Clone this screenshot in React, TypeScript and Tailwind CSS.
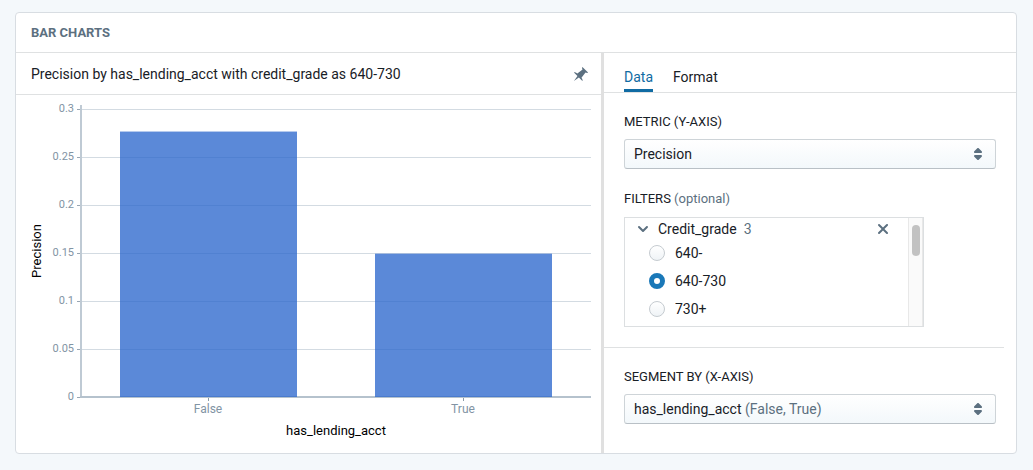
import { useState, type ReactNode } from "react";
import clsx from "clsx";

const BARS = [
  { label: "False", value: 0.2765 },
  { label: "True", value: 0.1493 },
];

const TICKS = ["0.3", "0.25", "0.2", "0.15", "0.1", "0.05", "0"];

const GRADES = ["640-", "640-730", "730+"];

const ICONS = {
  pin: "M9.41.92c-.51.51-.41 1.5.15 2.56L4.34 7.54C2.8 6.48 1.45 6.05.92 6.58l3.54 3.54-3.54 4.95 4.95-3.54 3.54 3.54c.53-.53.1-1.88-.96-3.42l4.06-5.22c1.06.56 2.04.66 2.55.15L9.41.92z",
  doubleCaret:
    "M5 7h6a1.003 1.003 0 00.71-1.71l-3-3C8.53 2.11 8.28 2 8 2s-.53.11-.71.29l-3 3A1.003 1.003 0 005 7zm6 2H5a1.003 1.003 0 00-.71 1.71l3 3c.18.18.43.29.71.29s.53-.11.71-.29l3-3A1.003 1.003 0 0011 9z",
  chevronDown:
    "M12 5c-.28 0-.53.11-.71.29L8 8.59l-3.29-3.3a1.003 1.003 0 00-1.42 1.42l4 4c.18.18.43.29.71.29s.53-.11.71-.29l4-4A1.003 1.003 0 0012 5z",
  cross:
    "M9.41 8l3.29-3.29c.19-.18.3-.43.3-.71a1.003 1.003 0 00-1.71-.71L8 6.59l-3.29-3.3a1.003 1.003 0 00-1.42 1.42L6.59 8 3.3 11.29c-.19.18-.3.43-.3.71a1.003 1.003 0 001.71.71L8 9.41l3.29 3.29c.18.19.43.3.71.3a1.003 1.003 0 00.71-1.71L9.41 8z",
};

function Icon({ name, className }: { name: keyof typeof ICONS; className?: string }) {
  return (
    <svg viewBox="0 0 16 16" className={clsx("size-4 fill-[#5c7080]", className)} aria-hidden="true">
      <path d={ICONS[name]} />
    </svg>
  );
}

function BarChart() {
  const baseline = 302;
  const step = 48;
  const unit = step / 0.05;

  return (
    <svg viewBox="0 0 585 358" className="block h-auto w-full" role="img" aria-label="Precision by has_lending_acct">
      {TICKS.map((tick, i) => (
        <g key={tick}>
          {tick !== "0" && <rect x={66} y={14 + i * step} width={509} height={1} fill="#d3dbe2" />}
          <rect x={61} y={14 + i * step} width={4} height={1} fill="#98a6b3" />
          <text x={58} y={17 + i * step} textAnchor="end" className="fill-[#8294a4] text-[11px]">
            {tick}
          </text>
        </g>
      ))}
      <rect x={64} y={10} width={2} height={293} fill="#bfcad4" />
      <rect x={64} y={301} width={511} height={2} fill="#b5c2cd" />
      {BARS.map((bar, i) => (
        <g key={bar.label}>
          <rect
            x={104 + i * 255}
            y={baseline - bar.value * unit}
            width={177}
            height={bar.value * unit}
            fill="#2965cc"
            fillOpacity={0.77}
          />
          <rect x={192 + i * 255} y={303} width={1} height={3} fill="#8a9ba8" />
          <text x={192 + i * 255} y={318} textAnchor="middle" className="fill-[#8294a4] text-xs">
            {bar.label}
          </text>
        </g>
      ))}
      <text x={320} y={340} textAnchor="middle" className="fill-black text-[13px]">
        has_lending_acct
      </text>
      <text transform="translate(25 156) rotate(-90)" textAnchor="middle" className="fill-black text-[13px]">
        Precision
      </text>
    </svg>
  );
}

interface SelectFieldProps {
  id: string;
  label: string;
  value: string;
  hint?: string;
}

function SelectField({ id, label, value, hint }: SelectFieldProps) {
  return (
    <div>
      <label htmlFor={id} className="block text-[13px]">
        {label}
      </label>
      <div className="relative mt-2 h-[30px]">
        <select
          id={id}
          className="h-full w-full appearance-none rounded-[3px] border border-[#ced4d8] border-b-[#b9c0c6] bg-linear-to-b from-white to-[#f3f8fb] px-[9px] text-transparent"
        >
          <option>{hint ? `${value} ${hint}` : value}</option>
        </select>
        {/* the value is painted over the select so the hint can be muted */}
        <div className="pointer-events-none absolute inset-0 flex items-center justify-between px-[10px]" aria-hidden="true">
          <span>
            {value} {hint && <span className="text-[#5c7080]">{hint}</span>}
          </span>
          <Icon name="doubleCaret" />
        </div>
      </div>
    </div>
  );
}

function Tab({ active, onClick, children }: { active: boolean; onClick: () => void; children: ReactNode }) {
  return (
    <button
      type="button"
      role="tab"
      aria-selected={active}
      onClick={onClick}
      className={clsx("h-9 border-b-[3px] pt-2", active ? "border-[#106ba3] text-[#106ba3]" : "border-transparent")}
    >
      {children}
    </button>
  );
}

function FilterBox() {
  const [grade, setGrade] = useState("640-730");

  return (
    <div className="mt-[9px] flex h-[110px] w-[300px] border border-[#dcdfe1]">
      <fieldset className="min-w-0 flex-1" aria-label="Credit_grade">
        <div className="flex h-[21px] items-center pr-[17px] pl-[10px]">
          <button type="button" aria-label="Collapse Credit_grade">
            <Icon name="chevronDown" className="block" />
          </button>
          <span className="ml-[7px]">Credit_grade</span>
          <span className="ml-[7px] text-[#5c7080]">3</span>
          <button type="button" aria-label="Remove filter" className="ml-auto">
            <Icon name="cross" className="block" />
          </button>
        </div>
        {GRADES.map((name) => (
          <label key={name} className="flex h-7 items-center gap-[10px] pl-6">
            <input
              type="radio"
              name="credit-grade"
              checked={grade === name}
              onChange={() => setGrade(name)}
              className="size-4 appearance-none rounded-full border border-[#c5cbd0] bg-linear-to-b from-white to-[#eff3f6] checked:border-[5px] checked:border-[#1a78b8] checked:bg-white checked:bg-none"
            />
            {name}
          </label>
        ))}
      </fieldset>
      <div className="w-[15px] border-x border-[#e8e8e8] bg-[#fafafa] pt-[7px]">
        <div className="mx-auto h-[31px] w-2 rounded-full bg-[#c2c2c2]" />
      </div>
    </div>
  );
}

export default function App() {
  const [tab, setTab] = useState("data");

  return (
    <main className="min-h-screen bg-[#f4f8fb] pt-3 pr-4 pb-4 pl-[15px] font-['Roboto',sans-serif] text-sm leading-[18px] text-[#182026]">
      <section className="overflow-hidden rounded border border-[#d8dde2] bg-white">
        <h2 className="flex h-10 items-center border-b border-[#dfe1e2] px-[15px] text-[13px] font-bold text-[#5c7080]">
          BAR CHARTS
        </h2>
        <div className="flex">
          <div className="min-w-0 flex-1">
            <div className="flex h-[42px] items-center justify-between border-b border-[#dfe1e2] pr-3 pl-[15px]">
              <h3>Precision by has_lending_acct with credit_grade as 640-730</h3>
              <button type="button" aria-label="Pin chart">
                <Icon name="pin" className="block" />
              </button>
            </div>
            <BarChart />
          </div>
          <div className="w-[415px] shrink-0 border-l-[3px] border-[#e0e0e0]">
            <div role="tablist" className="flex h-10 items-end gap-5 border-b border-[#dfe1e2] px-5">
              <Tab active={tab === "data"} onClick={() => setTab("data")}>
                Data
              </Tab>
              <Tab active={tab === "format"} onClick={() => setTab("format")}>
                Format
              </Tab>
            </div>
            <div className="mr-3 border-b border-[#dfe1e2] pt-5 pr-2 pb-5 pl-5">
              <SelectField id="metric" label="METRIC (Y-AXIS)" value="Precision" />
              <div className="mt-[21px] text-[13px]">
                FILTERS <span className="text-[#5c7080]">(optional)</span>
              </div>
              <FilterBox />
            </div>
            <div className="pt-5 pr-5 pl-5">
              <SelectField id="segment" label="SEGMENT BY (X-AXIS)" value="has_lending_acct" hint="(False, True)" />
            </div>
          </div>
        </div>
      </section>
    </main>
  );
}
